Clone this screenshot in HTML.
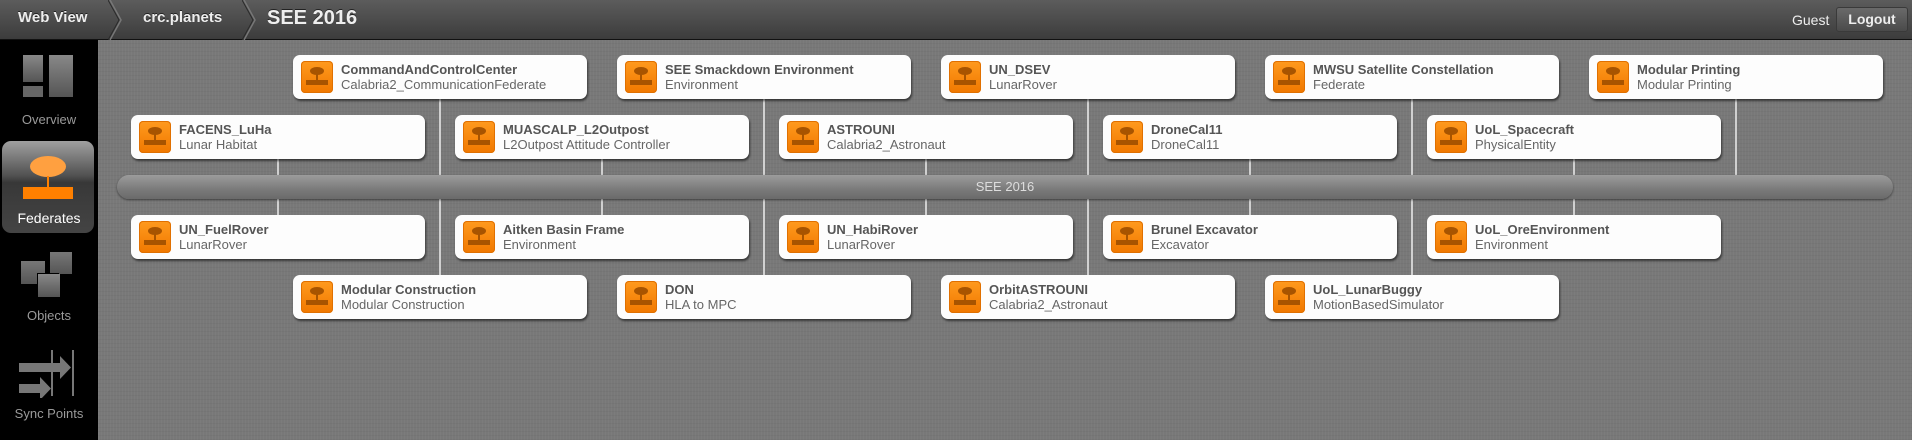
<!DOCTYPE html>
<html><head><meta charset="utf-8"><style>
*{margin:0;padding:0;box-sizing:border-box}
html,body{width:1912px;height:440px;overflow:hidden}
body{font-family:"Liberation Sans",sans-serif;background:#000;position:relative}
#hdr{position:absolute;left:0;top:0;width:1912px;height:40px;background:linear-gradient(#5c5c5c,#3c3c3c);border-bottom:1px solid #111;z-index:2}
.bc{position:absolute;color:#eee;font-weight:bold;text-shadow:0 -1px 0 #222}
.chev{position:absolute;top:0}
#side{position:absolute;left:0;top:0;width:98px;height:440px;background:#000}
#main{position:absolute;left:98px;top:40px;width:1814px;height:400px;background:#787878;
background-image:repeating-linear-gradient(90deg,rgba(255,255,255,.03) 0 1px,transparent 1px 3px),repeating-linear-gradient(0deg,rgba(0,0,0,.03) 0 1px,transparent 1px 4px)}
.lbl{position:absolute;left:0;width:98px;text-align:center;font-size:13px;color:#9a9a9a}
.card{position:absolute;width:294px;height:44px;background:#fdfdfd;border-radius:7px;box-shadow:1px 2px 2px rgba(0,0,0,.55)}
.ic{position:absolute;left:8px;top:6px;width:32px;height:32px;border-radius:4px;background:linear-gradient(#ff9a1e,#f07800);box-shadow:inset 0 0 0 1px #e07000}
.ic i{position:absolute;left:9px;top:6px;width:14px;height:8px;border-radius:50%;background:#a85400}
.ic b{position:absolute;left:15px;top:13px;width:2px;height:6px;background:#a85400}
.ic u{position:absolute;left:5px;top:19px;width:22px;height:5px;background:#a85400}
.t{position:absolute;left:48px;top:7px;font-size:13px;font-weight:bold;color:#555;white-space:nowrap}
.s{position:absolute;left:48px;top:22px;font-size:13px;color:#666;white-space:nowrap}
.vl{position:absolute;width:2px;background:#d0d0d0}
#bar{position:absolute;left:117px;top:175px;width:1776px;height:24px;border-radius:12px;background:linear-gradient(#9c9c9c,#7a7a7a 60%,#6a6a6a);box-shadow:0 1px 2px rgba(0,0,0,.5);text-align:center;color:#ddd;font-size:13px;line-height:24px}
</style></head><body>
<div id="side">
<div style="position:absolute;left:23px;top:55px;width:20px;height:27px;background:linear-gradient(#888,#555)"></div>
<div style="position:absolute;left:23px;top:86px;width:20px;height:11px;background:#666"></div>
<div style="position:absolute;left:49px;top:55px;width:24px;height:42px;background:linear-gradient(#888,#555)"></div>
<div class="lbl" style="top:112px">Overview</div>
<div style="position:absolute;left:2px;top:141px;width:92px;height:92px;border-radius:9px;background:linear-gradient(#a0a0a0,#505050 38%,#383838 45%,#444 100%)"></div>
<div style="position:absolute;left:30px;top:156px;width:36px;height:21px;border-radius:50%;background:#ffa040"></div>
<div style="position:absolute;left:47px;top:176px;width:2px;height:11px;background:#ff8000"></div>
<div style="position:absolute;left:23px;top:187px;width:50px;height:12px;background:#ff8000"></div>
<div class="lbl" style="top:210px;color:#fff;font-size:14px">Federates</div>
<div style="position:absolute;left:21px;top:261px;width:24px;height:23px;background:linear-gradient(#777,#555)"></div>
<div style="position:absolute;left:50px;top:252px;width:22px;height:22px;background:linear-gradient(#777,#555)"></div>
<div style="position:absolute;left:38px;top:274px;width:22px;height:23px;background:linear-gradient(#888,#555);box-shadow:-1px -1px 0 #000"></div>
<div class="lbl" style="top:308px">Objects</div>
<svg style="position:absolute;left:18px;top:350px" width="60" height="48"><g fill="#777"><rect x="1" y="13" width="44" height="9"/><polygon points="42,6 53,17.5 42,29"/><rect x="1" y="34" width="25" height="9"/><polygon points="22,27 33,38.5 22,50"/><rect x="33" y="0" width="2" height="46"/><rect x="54" y="0" width="2" height="46"/></g></svg>
<div class="lbl" style="top:406px">Sync Points</div>
</div>
<div id="hdr">
<div class="bc" style="left:18px;top:9px;font-size:15px">Web View</div>
<svg class="chev" style="left:108px" width="16" height="40"><path d="M2 0 L13 20 L2 40" stroke="#777" stroke-width="1.5" fill="none"/><path d="M0 0 L11 20 L0 40" stroke="#2a2a2a" stroke-width="1" fill="none"/></svg>
<div class="bc" style="left:143px;top:9px;font-size:15px">crc.planets</div>
<svg class="chev" style="left:242px" width="16" height="40"><path d="M2 0 L13 20 L2 40" stroke="#777" stroke-width="1.5" fill="none"/><path d="M0 0 L11 20 L0 40" stroke="#2a2a2a" stroke-width="1" fill="none"/></svg>
<div class="bc" style="left:267px;top:7px;font-size:20px">SEE 2016</div>
<div style="position:absolute;left:1792px;top:12px;color:#eee;font-size:14px">Guest</div>
<div style="position:absolute;left:1836px;top:7px;width:72px;height:25px;border-radius:3px;background:linear-gradient(#6a6a6a,#4a4a4a);border:1px solid #3a3a3a;color:#eee;font-weight:bold;font-size:14px;text-align:center;line-height:23px">Logout</div>
</div>
<div id="main"></div>
<div id="lines"></div>
<div id="bar">SEE 2016</div>
<div id="cards"></div>
<script>
var rA=[["CommandAndControlCenter","Calabria2_CommunicationFederate"],["SEE Smackdown Environment","Environment"],["UN_DSEV","LunarRover"],["MWSU Satellite Constellation","Federate"],["Modular Printing","Modular Printing"]];
var rB=[["FACENS_LuHa","Lunar Habitat"],["MUASCALP_L2Outpost","L2Outpost Attitude Controller"],["ASTROUNI","Calabria2_Astronaut"],["DroneCal11","DroneCal11"],["UoL_Spacecraft","PhysicalEntity"]];
var rC=[["UN_FuelRover","LunarRover"],["Aitken Basin Frame","Environment"],["UN_HabiRover","LunarRover"],["Brunel Excavator","Excavator"],["UoL_OreEnvironment","Environment"]];
var rD=[["Modular Construction","Modular Construction"],["DON","HLA to MPC"],["OrbitASTROUNI","Calabria2_Astronaut"],["UoL_LunarBuggy","MotionBasedSimulator"]];
var hh="",ll="";
function row(a,x0,y){a.forEach(function(c,i){var x=x0+i*324;hh+='<div class="card" style="left:'+x+'px;top:'+y+'px"><div class="ic"><i></i><b></b><u></u></div><div class="t">'+c[0]+'</div><div class="s">'+c[1]+'</div></div>';});}
function vl(n,x0,y1,y2){for(var i=0;i<n;i++){ll+='<div class="vl" style="left:'+(x0+i*324+146)+'px;top:'+y1+'px;height:'+(y2-y1)+'px"></div>';}}
vl(5,293,99,175);vl(5,131,159,175);vl(5,131,199,215);vl(4,293,199,275);
row(rA,293,55);row(rB,131,115);row(rC,131,215);row(rD,293,275);
document.getElementById("cards").innerHTML=hh;document.getElementById("lines").innerHTML=ll;
</script>
</body></html>
